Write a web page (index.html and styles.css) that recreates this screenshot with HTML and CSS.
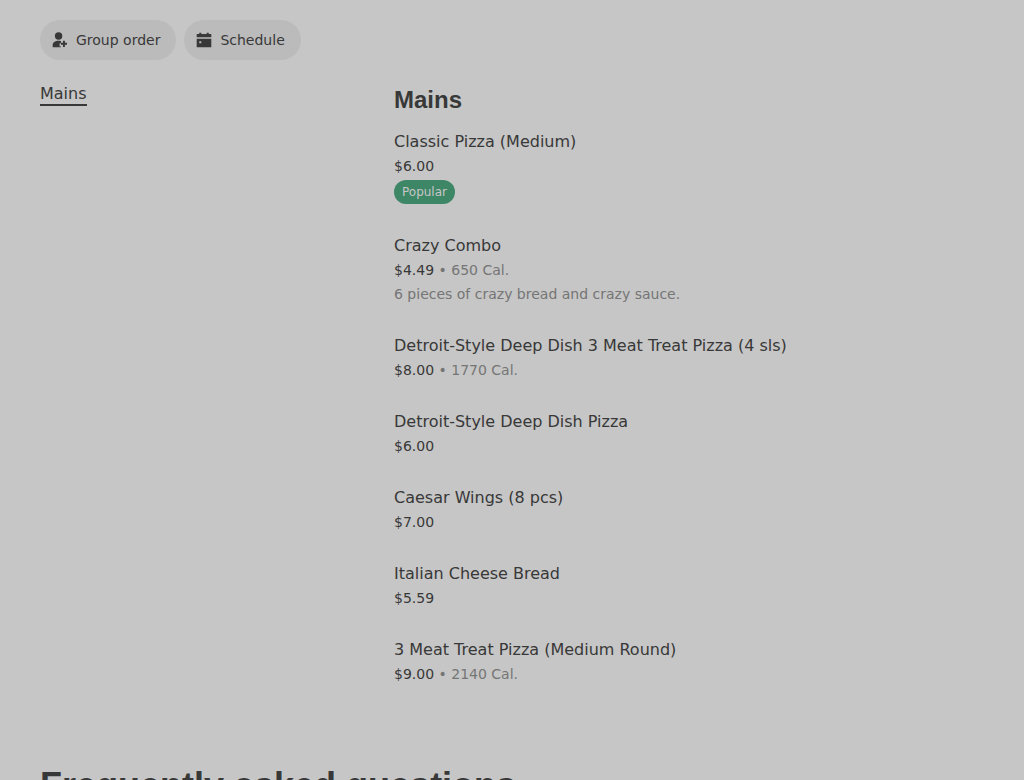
FILE: index.html
```html
<!DOCTYPE html>
<html lang="en">
  <head>
    <meta charset="UTF-8" />
    <meta name="viewport" content="width=device-width, initial-scale=1.0" />
    <title>Menu</title>
    <link rel="stylesheet" href="styles.css">
  </head>
  <body>
    <div class="actions">
      <button class="pill">
        <svg width="16" height="16" viewBox="0 0 16 16" fill="currentColor">
          <circle cx="6.6" cy="4" r="3.7" />
          <path d="M6.6 8.8c.9 0 1.7.1 2.4.4v2h-1.400v3.200h1.400V15.300H.7v-2.200C.7 10.500 3 8.800 6.600 8.800z" />
          <path d="M11 8.700h1.900v2.100H15v2h-2.100V15H11v-2.200H8.900v-2H11z" />
        </svg>
        <span>Group order</span>
      </button>
      <button class="pill">
        <svg width="16" height="16" viewBox="0 0 16 16" fill="currentColor">
          <path d="M.7 2h2.600V.7h2V2h5.400V.7h2V2h2.600v3.300H.7z" />
          <path fill-rule="evenodd" d="M.7 6.700h14.600v8.600H.7zM3.300 9.300v2h2v-2z" />
        </svg>
        <span>Schedule</span>
      </button>
    </div>

    <div class="menu">
      <div class="side">
        <a class="tab">Mains</a>
      </div>
      <div class="list">
        <h2>Mains</h2>
        <div class="item">
          <h3>Classic Pizza (Medium)</h3>
          <p class="price">$6.00</p>
          <span class="badge">Popular</span>
        </div>
        <div class="item">
          <h3>Crazy Combo</h3>
          <p class="price">$4.49 <span>• 650 Cal.</span></p>
          <p class="desc">6 pieces of crazy bread and crazy sauce.</p>
        </div>
        <div class="item">
          <h3>Detroit-Style Deep Dish 3 Meat Treat Pizza (4 sls)</h3>
          <p class="price">$8.00 <span>• 1770 Cal.</span></p>
        </div>
        <div class="item">
          <h3>Detroit-Style Deep Dish Pizza</h3>
          <p class="price">$6.00</p>
        </div>
        <div class="item">
          <h3>Caesar Wings (8 pcs)</h3>
          <p class="price">$7.00</p>
        </div>
        <div class="item">
          <h3>Italian Cheese Bread</h3>
          <p class="price">$5.59</p>
        </div>
        <div class="item">
          <h3>3 Meat Treat Pizza (Medium Round)</h3>
          <p class="price">$9.00 <span>• 2140 Cal.</span></p>
        </div>
      </div>
    </div>

    <h1>Frequently asked questions</h1>
  </body>
</html>
```
FILE: styles.css
```css
* {
  box-sizing: border-box;
}
body {
  margin: 0;
  height: 780px;
  padding: 20px 40px 0;
  overflow: hidden;
  background-color: #c6c6c6;
  color: #383838;
  font-family: "DejaVu Sans", sans-serif;
}
h1,
h2,
h3,
p {
  margin: 0;
}
.actions {
  display: flex;
  gap: 8px;
}
.pill {
  display: flex;
  align-items: center;
  gap: 8px;
  height: 40px;
  padding: 0 16px 0 12px;
  border: none;
  border-radius: 20px;
  background-color: #bbbbbb;
  color: #383838;
  font-family: inherit;
  font-size: 14px;
  line-height: 20px;
}
.menu {
  display: grid;
  grid-template-columns: 354px 1fr;
  height: 704px;
}
.tab {
  display: inline-block;
  margin-top: 22px;
  height: 24px;
  font-size: 16px;
  line-height: 24px;
  border-bottom: 2px solid #383838;
}
.list {
  padding-top: 24px;
}
.list h2 {
  font-family: "Liberation Sans", Arial, sans-serif;
  font-size: 24px;
  line-height: 32px;
  margin-bottom: 14px;
}
.item {
  margin-bottom: 28px;
}
.item h3 {
  font-size: 16px;
  font-weight: normal;
  line-height: 24px;
}
.price,
.desc {
  font-size: 14px;
  line-height: 24px;
}
.price span,
.desc {
  color: #757575;
}
.badge {
  display: block;
  width: fit-content;
  height: 24px;
  margin: 2px 0 30px;
  padding: 0 8px;
  border-radius: 12px;
  background-color: #3d8767;
  color: #c6c6c6;
  font-size: 12px;
  line-height: 24px;
}
h1 {
  font-family: "Liberation Sans", Arial, sans-serif;
  font-size: 36px;
  line-height: 44px;
}
```
